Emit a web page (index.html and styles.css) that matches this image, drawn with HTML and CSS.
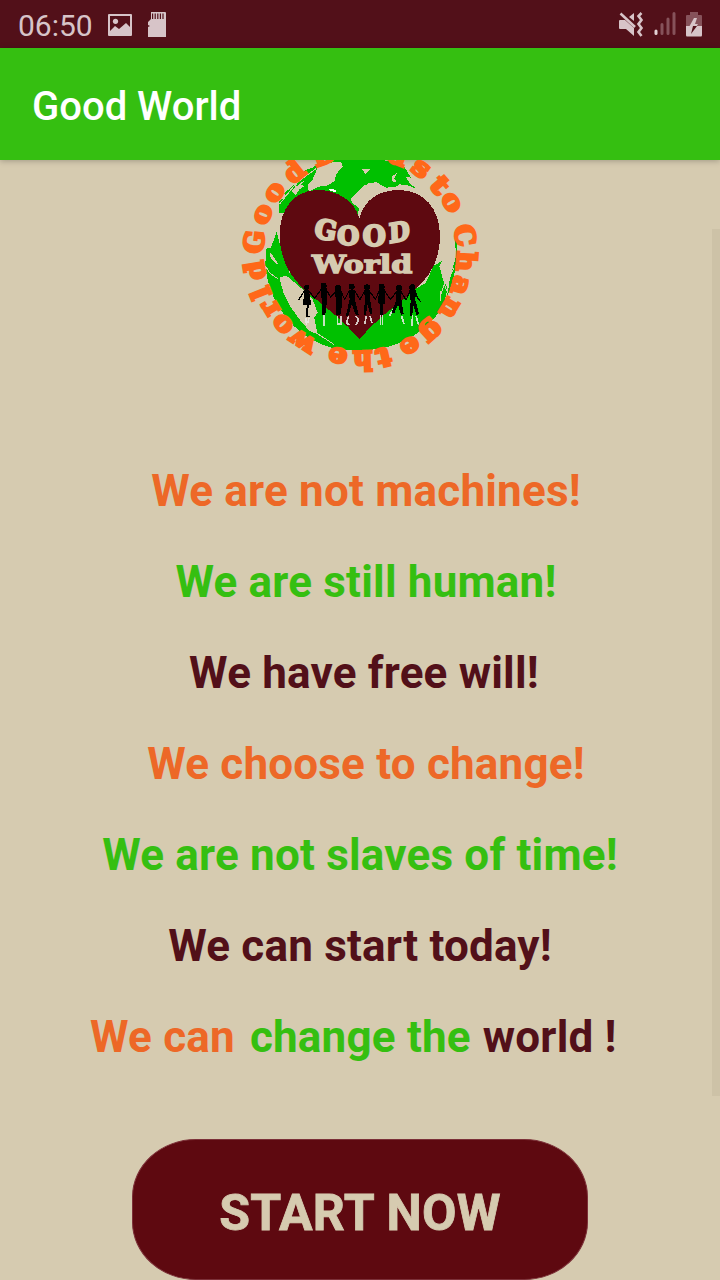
FILE: index.html
```
<!DOCTYPE html>
<html lang="en">
<head>
<meta charset="utf-8">
<title>Good World</title>
<link rel="stylesheet" href="styles.css">
</head>
<body>
<div class="status">
  <span class="clock">06:50</span>
  <svg class="pic" width="24" height="22" viewBox="0 0 24 22"><path fill="#d7c4c8" fill-rule="evenodd" d="M1 0H23Q24 0 24 1V21Q24 22 23 22H1Q0 22 0 21V1Q0 0 1 0ZM2 2V17L7 12L11 15L18 9L22 13V2Z"/><circle cx="7.5" cy="7.3" r="2.6" fill="#d7c4c8"/></svg>
  <svg class="card" width="18" height="25" viewBox="0 0 18 25"><path fill="#d7c4c8" d="M3 0H17Q18 0 18 1V25H0V15L2 14L0 13V10L3 7Z"/><path stroke="#521019" stroke-width="1.2" d="M4.6 1.5V7M7.2 1.5V7M9.8 1.5V7M12.4 1.5V7M15 1.5V7"/></svg>
  <div class="system">
    <svg width="25" height="25" viewBox="0 0 25 25"><path fill="#d7c4c8" d="M0 9Q0 8 1 8H6L15 16V24L7 17H1Q0 17 0 16ZM10 5L15 1V9Z"/><path stroke="#d7c4c8" stroke-width="2.500" d="M1.500 1.500L16 15"/><path fill="none" stroke="#d7c4c8" stroke-width="2.600" d="M22.500 1L19.500 4L22.500 8L19.500 12L22.500 16L19.500 20L22.500 24"/></svg>
    <svg class="signal" width="22" height="24" viewBox="0 0 22 24"><g stroke-width="3" stroke-linecap="round" stroke="#86525a"><path d="M8 12.5V21.5M14 7V21.5M20 1.5V21.5"/><path stroke="#e3d2d5" d="M2 19V21.5"/></g></svg>
    <svg width="16" height="25" viewBox="0 0 16 25"><path fill="#86525a" d="M4 0H12V3H15Q16 3 16 4V15H0V4Q0 3 1 3H4Z"/><path fill="#d7c4c8" d="M0 14H16V23Q16 24.500 15 24.500H1Q0 24.500 0 23Z"/><path fill="#d7c4c8" d="M8 6H11L9 12H12L10 15H3Z"/><path fill="#521019" d="M7 14H11L5 22Z"/></svg>
  </div>
</div>
<header class="appbar">Good World</header>
<main class="content">
  <svg class="logo" width="250" height="220" viewBox="0 12 750 660">
    <g fill="#00c000">
      <path d="M128 170L130 135L150 120L143 112L165 95L185 72L180 65L210 42L230 35L250 20L290 12H440L480 20L470 28L500 25L525 65L508 62L522 82L540 98L515 88L490 85L480 92L450 95L420 78L385 88L345 128L370 160L360 185H250Z"/>
      <path d="M122 228L105 275L90 278L88 330C95 420 150 505 225 550C280 580 330 588 400 582C480 575 550 540 600 480C640 425 668 350 664 235L656 232L660 300L648 345L635 395L622 375L610 330L618 315L592 330L570 380L370 500L160 350L130 260Z"/>
    </g>
    <g fill="#d6cbb0">
      <path d="M215 88L230 70L245 35L280 20L315 18L320 32L300 55L296 75L275 88L250 92L218 106Z"/>
      <path d="M130 365L150 358L200 400L230 430L245 470L235 485L245 535L220 525C180 480 140 430 130 365Z"/>
      <path d="M345 132L375 98L400 80L418 86L410 105L395 125L387 115L393 97L375 115L378 138L363 150L352 145Z"/>
      <path d="M376 38L401 40L389 54ZM482 52L468 60L470 78L482 76L475 67ZM420 104L435 92L455 102L430 110Z"/>
      <path d="M165 105L190 85L205 90L190 100L178 118ZM104 290L128 325L118 322L100 300Z"/>
    </g>
    <path fill="none" stroke="#d6cbb0" stroke-width="3" d="M130 145L180 82L240 38M88 330L102 352L125 368M240 530L295 566M612 423L625 385L632 405M615 435L612 405M655 335L640 365L635 402L628 430M190 58L176 98L203 76"/>
    <path fill="#5e0910" d="M370 187C354 130 300 102 245 102C175 102 131 160 131 235C131 310 160 360 210 405C270 455 330 500 370 550C410 500 470 455 530 408C585 360 612 310 612 240C612 160 565 102 490 102C430 102 385 130 370 187Z"/>
    <path fill="#fff" d="M278 101L292 98L302 106L293 108Z"/>
    <g class="word">
      <text transform="translate(232 243) rotate(11)" font-size="80" textLength="66" lengthAdjust="spacingAndGlyphs">G</text>
      <text x="304" y="267" font-size="80" textLength="66" lengthAdjust="spacingAndGlyphs">O</text>
      <text x="380" y="269" font-size="82" textLength="69" lengthAdjust="spacingAndGlyphs">O</text>
      <text transform="translate(460 261) rotate(-10) skewX(-8)" font-size="78" textLength="63" lengthAdjust="spacingAndGlyphs">D</text>
      <text class="lower" x="228" y="350" font-size="74" textLength="301" lengthAdjust="spacingAndGlyphs">World</text>
    </g>
    <g class="shadows" stroke="#e9e9e4" stroke-width="5" opacity=".85"><path d="M209 485L212 508M219 485L216 500M264 478V510M304 480V504M314 480V504H302M338 480L332 500L340 507M360 480L368 492L360 507M390 480L387 505M402 480L408 502M433 474V508M439 474V508M473 458L460 480M497 480L504 505M530 478L527 510M540 480L548 508" fill="none"/></g>
    <g fill="#000">
      <circle cx="212" cy="394" r="8"/><path d="M205 401H219L222 425L226 447H218L216 479L222 482H210L212 448H201Z"/>
      <circle cx="263" cy="389" r="9"/><path d="M254 395H273L274 425L268 477H258L257 430Z"/>
      <circle cx="306" cy="396" r="9"/><path d="M298 402H316L319 440L313 478H301L299 440Z"/>
      <circle cx="347" cy="392" r="9"/><path d="M338 401H357L356 430L369 478H360L347 445L337 479H330L341 430Z"/>
      <circle cx="393" cy="394" r="9"/><path d="M384 402H402L402 430L409 472L403 475L394 445L390 478H383L387 430Z"/>
      <circle cx="437" cy="392" r="9"/><path d="M428 400H447L447 443L440 446V476H432V445L427 442Z"/>
      <circle cx="489" cy="396" r="9"/><path d="M479 404H497L496 430L503 474L495 477L486 446L474 473L467 469L480 435Z"/>
      <circle cx="529" cy="394" r="9"/><path d="M520 402H540L538 432L549 474L541 477L531 446L529 481H521L524 435Z"/>
    </g>
    <path fill="none" stroke="#000" stroke-width="3.500" d="M206 404L187 433M218 404L236 427L256 399M270 399L284 424L300 405M314 405L326 430L340 404M356 404L372 431L386 405M400 405L418 430L431 403M445 403L463 431L482 407M495 407L510 432L523 404M537 404L545 426L554 438"/>
    <g class="ring" transform="translate(372 294)">
      <text transform="rotate(-83.500)" y="-291">G</text>
      <text transform="rotate(-67.800) scale(1.100 1)" y="-293">o</text>
      <text transform="rotate(-54.200) scale(1.100 1)" y="-293">o</text>
      <text transform="rotate(-38.800)" y="-289">d</text>
      <text transform="rotate(-20)" y="-290">D</text>
      <text transform="rotate(21)" y="-290">d</text>
      <text transform="rotate(35.500) scale(1.100 1)" y="-292">s</text>
      <text transform="rotate(49.200) scale(1.150 1)" y="-290">t</text>
      <text transform="rotate(60.500) scale(1.100 1)" y="-293">o</text>
      <text transform="rotate(79.900)" y="-291">C</text>
      <text transform="rotate(94)" y="-291">h</text>
      <text transform="rotate(107.400) scale(1.050 1)" y="-292">a</text>
      <text transform="rotate(121)" y="-291">n</text>
      <text transform="rotate(137.400) scale(1.100 1)" y="-294">g</text>
      <text transform="rotate(151.500) scale(1.100 1)" y="-291">e</text>
      <text transform="rotate(167) scale(1.150 1)" y="-291">t</text>
      <text transform="rotate(178.500)" y="-291">h</text>
      <text transform="rotate(192.200) scale(1.100 1)" y="-291">e</text>
      <text transform="rotate(213.100) scale(1.120 1)" y="-291">w</text>
      <text transform="rotate(227.700) scale(1.100 1)" y="-291">o</text>
      <text transform="rotate(239)" y="-291">r</text>
      <text transform="rotate(248.500)" y="-291">l</text>
      <text transform="rotate(261)" y="-291">d</text>
    </g>
  </svg>
  <div class="lines">
    <p class="line orange shift-a">We are not machines!</p>
    <p class="line green shift-a">We are still human!</p>
    <p class="line maroon shift-b">We have free will!</p>
    <p class="line orange shift-a">We choose to change!</p>
    <p class="line green">We are not slaves of time!</p>
    <p class="line maroon">We can start today!</p>
    <p class="line last"><span class="orange">We can</span><span class="green">change the</span><span class="maroon">world !</span></p>
  </div>
  <button class="start">START NOW</button>
  <div class="scrollbar"></div>
</main>
</body>
</html>
```
FILE: styles.css
```
* { box-sizing: border-box; }
body {
  margin: 0;
  width: 720px;
  height: 1280px;
  overflow: hidden;
  background: #d6cbb0;
  font-family: Roboto, "Liberation Sans", sans-serif;
}
.status {
  height: 48px;
  padding: 0 18px;
  display: flex;
  align-items: center;
  background: #521019;
  color: #d7c4c8;
}
.clock { width: 90px; font-size: 30px; line-height: 48px; padding-top: 4px; }
.pic { margin-top: 2px; }
.card { margin-left: 16px; margin-top: 1px; }
.system { margin-left: auto; display: flex; align-items: center; gap: 10px; }
.appbar {
  position: relative;
  height: 112px;
  padding: 3px 32px 0;
  background: #35bf11;
  color: #fff;
  font-size: 40px;
  font-weight: 500;
  line-height: 112px;
  box-shadow: 0 1px 6px rgba(0, 0, 0, .25);
}
.content {
  position: relative;
  height: 1120px;
  display: flex;
  flex-direction: column;
  align-items: center;
}
.logo { display: block; margin-left: 2px; shape-rendering: crispEdges; }
.word { fill: #d6cbb0; stroke: #d6cbb0; stroke-width: 7; font-family: "DejaVu Serif", serif; font-weight: bold; }
.lower { stroke-width: 4; }
.ring { fill: #ff6819; stroke: #ff6819; stroke-width: 8; font-family: "DejaVu Serif", serif; font-weight: bold; font-size: 80px; text-anchor: middle; }
.lines { margin-top: 66px; width: 720px; }
.line {
  margin: 0;
  height: 91px;
  line-height: 91px;
  font-size: 44px;
  font-weight: 700;
  letter-spacing: .2px;
  text-align: center;
  white-space: nowrap;
}
.shift-a { padding-left: 12px; }
.shift-b { padding-left: 8px; }
.last { display: flex; padding-left: 90px; }
.last .green { margin-left: 15px; }
.last .maroon { margin-left: 12px; }
.orange { color: #ed6827; }
.green { color: #35bf11; }
.maroon { color: #521019; }
.start {
  margin: 56px 0 0;
  width: 456px;
  height: 141px;
  padding: 7px 0 0;
  border: 1px solid #7c3038;
  border-radius: 64px / 58px;
  background: #5e0910;
  color: #d6cbb0;
  font: 700 50px Roboto, "Liberation Sans", sans-serif;
  letter-spacing: .3px;
  -webkit-text-stroke: .8px #d6cbb0;
}
.scrollbar {
  position: absolute;
  top: 69px;
  right: 0;
  width: 8px;
  height: 867px;
  background: #cdc2a7;
}
```
